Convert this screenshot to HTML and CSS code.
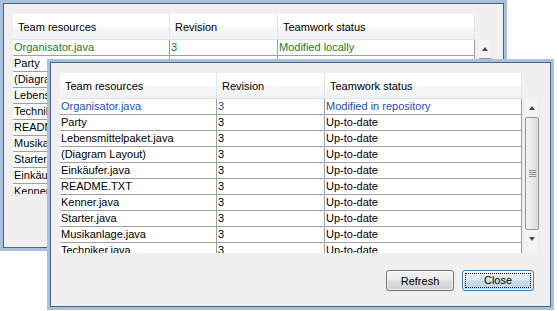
FILE: index.html
```html
<!DOCTYPE html>
<html lang="en">
<head>
    <meta charset="UTF-8">
    <title>Team resources</title>
    <link rel="stylesheet" href="styles.css">
</head>
<body>
    <div class="window back">
        <div class="table">
            <div class="head cols">
                <div class="th">Team resources</div>
                <div class="th">Revision</div>
                <div class="th">Teamwork status</div>
            </div>
            <div class="corner"></div>
            <div class="viewport">
                <div class="row cols local"><div class="td">Organisator.java</div><div class="td">3</div><div class="td">Modified locally</div></div>
                <div class="row cols"><div class="td">Party</div><div class="td">3</div><div class="td">Up-to-date</div></div>
                <div class="row cols"><div class="td">(Diagram Layout)</div><div class="td">3</div><div class="td">Up-to-date</div></div>
                <div class="row cols"><div class="td">Lebensmittelpaket.java</div><div class="td">3</div><div class="td">Up-to-date</div></div>
                <div class="row cols"><div class="td">Techniker.java</div><div class="td">3</div><div class="td">Up-to-date</div></div>
                <div class="row cols"><div class="td">README.TXT</div><div class="td">3</div><div class="td">Up-to-date</div></div>
                <div class="row cols"><div class="td">Musikanlage.java</div><div class="td">3</div><div class="td">Up-to-date</div></div>
                <div class="row cols"><div class="td">Starter.java</div><div class="td">3</div><div class="td">Up-to-date</div></div>
                <div class="row cols"><div class="td">Einkäufer.java</div><div class="td">3</div><div class="td">Up-to-date</div></div>
                <div class="row cols"><div class="td">Kenner.java</div><div class="td">3</div><div class="td">Up-to-date</div></div>
            </div>
            <div class="scrollbar">
                <div class="arrow"><span class="tri up"></span></div>
                <div class="thumb"><span class="grip"></span></div>
                <div class="arrow"><span class="tri down"></span></div>
            </div>
        </div>
        <div class="buttons">
            <button class="btn">Refresh</button>
            <button class="btn default"><span>Close</span></button>
        </div>
    </div>

    <div class="window front">
        <div class="table">
            <div class="head cols">
                <div class="th">Team resources</div>
                <div class="th">Revision</div>
                <div class="th">Teamwork status</div>
            </div>
            <div class="corner"></div>
            <div class="viewport">
                <div class="row cols remote"><div class="td">Organisator.java</div><div class="td">3</div><div class="td">Modified in repository</div></div>
                <div class="row cols"><div class="td">Party</div><div class="td">3</div><div class="td">Up-to-date</div></div>
                <div class="row cols"><div class="td">Lebensmittelpaket.java</div><div class="td">3</div><div class="td">Up-to-date</div></div>
                <div class="row cols"><div class="td">(Diagram Layout)</div><div class="td">3</div><div class="td">Up-to-date</div></div>
                <div class="row cols"><div class="td">Einkäufer.java</div><div class="td">3</div><div class="td">Up-to-date</div></div>
                <div class="row cols"><div class="td">README.TXT</div><div class="td">3</div><div class="td">Up-to-date</div></div>
                <div class="row cols"><div class="td">Kenner.java</div><div class="td">3</div><div class="td">Up-to-date</div></div>
                <div class="row cols"><div class="td">Starter.java</div><div class="td">3</div><div class="td">Up-to-date</div></div>
                <div class="row cols"><div class="td">Musikanlage.java</div><div class="td">3</div><div class="td">Up-to-date</div></div>
                <div class="row cols"><div class="td">Techniker.java</div><div class="td">3</div><div class="td">Up-to-date</div></div>
            </div>
            <div class="scrollbar">
                <div class="arrow"><span class="tri up"></span></div>
                <div class="thumb"><span class="grip"></span></div>
                <div class="arrow"><span class="tri down"></span></div>
            </div>
        </div>
        <div class="buttons">
            <button class="btn">Refresh</button>
            <button class="btn default"><span>Close</span></button>
        </div>
    </div>
</body>
</html>
```

FILE: styles.css
```css
body {
    margin: 0;
    background: #fff;
    font-family: "Liberation Sans", Arial, sans-serif;
    font-size: 11px;
    color: #000;
    overflow: hidden;
}

/* dialog frames, placed like windows on a desktop */
.window {
    position: absolute;
    box-sizing: border-box;
    width: 507px;
    height: 251px;
    background: #f0f0f0;
    border: 1px solid #4a6283;
    box-shadow: 0 0 0 3px #a9c1dd;
    padding: 10px 0 0 9px;
}
.back {
    left: 3px;
    top: 3px;
    width: 501px;
    height: 245px;
}
.front {
    left: 50px;
    top: 62px;
    width: 501px;
    height: 245px;
}

.table {
    display: grid;
    grid-template-columns: 462px 18px;
    grid-template-rows: 26px 154px;
}
.cols {
    display: grid;
    grid-template-columns: 157px 108px 197px;
}

.head {
    background: linear-gradient(#ffffff, #ffffff 50%, #f6f7f8 51%, #f1f2f4);
    border-bottom: 1px solid #e2e3e5;
    box-sizing: border-box;
}
.th {
    padding: 3px 0 0 5px;
    line-height: 20px;
    border-right: 1px solid #e3e4e6;
    white-space: nowrap;
}

.viewport {
    overflow: hidden;
}
.row {
    background: #fff;
}
.td {
    height: 15px;
    line-height: 15px;
    padding-left: 1px;
    border-right: 1px solid #a0a0a0;
    border-bottom: 1px solid #a0a0a0;
    white-space: nowrap;
    overflow: hidden;
}
.local .td {
    color: #1d7a1d;
}
.remote .td {
    color: #1e4f9e;
}

.scrollbar {
    display: flex;
    flex-direction: column;
    background: linear-gradient(90deg, #ebebeb, #f4f4f4 20%, #f4f4f4 80%, #ebebeb);
}
.arrow {
    height: 17px;
    display: flex;
    align-items: center;
    justify-content: center;
    padding-left: 1px;
}
.tri {
    width: 0;
    height: 0;
    border-left: 3.5px solid transparent;
    border-right: 3.5px solid transparent;
}
.tri.up {
    border-bottom: 4px solid #4a4a4a;
}
.tri.down {
    border-top: 4px solid #4a4a4a;
}
.thumb {
    height: 111px;
    margin: 1px 1px 0 3px;
    border: 1px solid #959595;
    border-radius: 2px;
    background: linear-gradient(90deg, #f3f3f3, #e9e9e9 50%, #d9d9d9);
    display: flex;
    align-items: center;
    justify-content: center;
}
.grip {
    width: 7px;
    height: 7px;
    background: repeating-linear-gradient(#8f8f8f 0 1px, transparent 1px 2px);
}

.buttons {
    display: flex;
    justify-content: flex-end;
    gap: 8px;
    margin-top: 17px;
    padding-right: 16px;
}
.btn {
    box-sizing: border-box;
    width: 68px;
    height: 21px;
    padding: 0;
    font-family: "Liberation Sans", Arial, sans-serif;
    font-size: 11px;
    color: #000;
    border: 1px solid #707070;
    border-radius: 3px;
    background: linear-gradient(#f2f2f2, #ebebeb 48%, #dddddd 52%, #cfcfcf);
    box-shadow: inset 0 0 0 1px rgba(255,255,255,0.7);
}
.btn.default {
    width: 72px;
    border-color: #3c7fb1;
    background: linear-gradient(#eaf4fb, #dbeaf6 48%, #c9dded 52%, #bcd3e8);
    padding: 2px;
}
.btn.default span {
    display: block;
    height: 100%;
    line-height: 13px;
    border: 1px dotted #000;
    box-sizing: border-box;
}
```
